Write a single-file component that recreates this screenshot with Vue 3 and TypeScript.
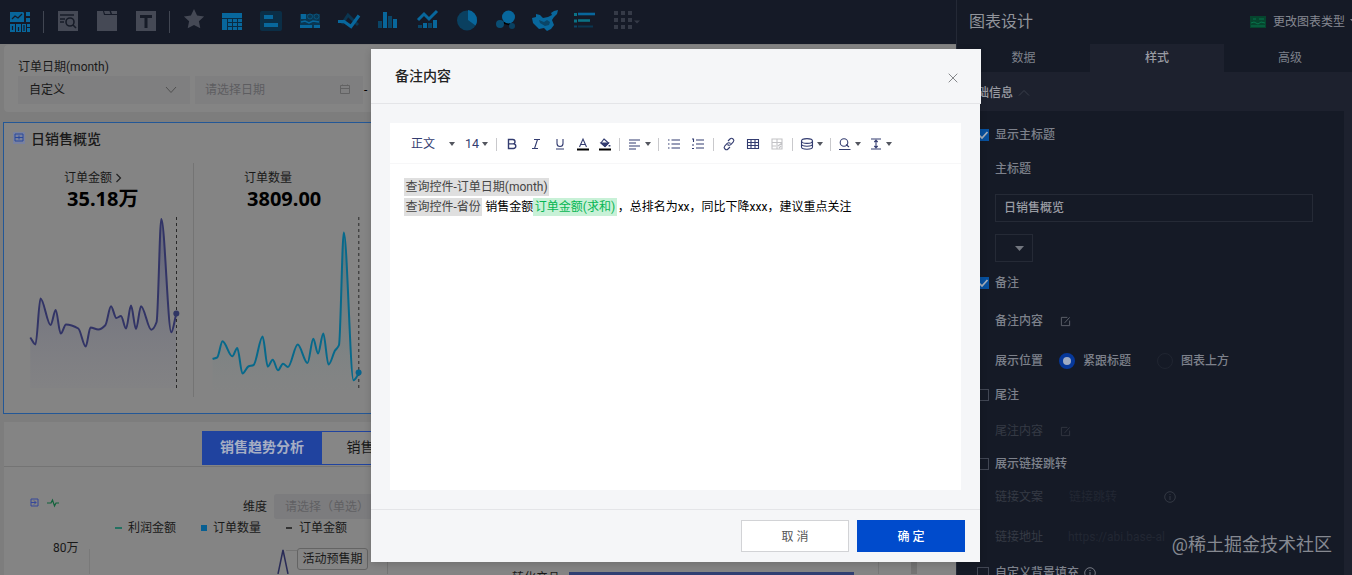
<script setup lang="ts">
type Point = [number, number]

// Monotone cubic smoothing keeps each peak at its data point.
function smooth(points: Point[]): string {
  const n = points.length
  const slopes: number[] = []
  for (let i = 0; i < n - 1; i++) {
    slopes.push((points[i + 1][1] - points[i][1]) / (points[i + 1][0] - points[i][0]))
  }
  const tangents = points.map((_, i) => {
    if (i === 0) return slopes[0]
    if (i === n - 1) return slopes[n - 2]
    const a = slopes[i - 1]
    const b = slopes[i]
    return a * b <= 0 ? 0 : (2 * a * b) / (a + b)
  })
  let d = `M${points[0][0]} ${points[0][1]}`
  for (let i = 0; i < n - 1; i++) {
    const h = (points[i + 1][0] - points[i][0]) / 3
    d += `C${points[i][0] + h} ${points[i][1] + tangents[i] * h} ${points[i + 1][0] - h} ${points[i + 1][1] - tangents[i + 1] * h} ${points[i + 1][0]} ${points[i + 1][1]}`
  }
  return d
}

const amount: Point[] = [
  [30.3, 337.5], [35.5, 344.5], [40.5, 298.5], [50.6, 325], [55.7, 310], [60.7, 333.6], [66, 324.5], [78.3, 328.5],
  [85.7, 346.5], [90.5, 327.5], [98.3, 329.5], [105.3, 325.3], [111, 306.3], [116.3, 318], [121, 316], [126, 328.6],
  [131, 305.6], [136, 329], [141, 306.3], [151.3, 329.7], [156.6, 322], [161.3, 219], [171.3, 332.3], [176, 315]
]
const count: Point[] = [
  [212.6, 359], [217.3, 357.3], [222.5, 341.3], [232.3, 356.3], [237.3, 348], [242.5, 373.6], [248.3, 366.5],
  [253.6, 365], [262.6, 336.6], [267.8, 366.6], [272.7, 359.7], [278, 370.3], [283, 363.7], [288, 367], [297.7, 344.6],
  [307.5, 363], [313.3, 338.7], [318, 353.6], [323.3, 333.4], [328.5, 364.6], [335, 350.6], [339, 345], [343.8, 232.5],
  [353.5, 380.3], [359, 373]
]
const amountLine = smooth(amount)
const countLine = smooth(count)
const amountArea = `${amountLine}V388H30.3Z`
const countArea = `${countLine}V390H212.6Z`

const tabs = ['数据', '样式', '高级']
const legend = [
  { name: '利润金额', kind: 'profit' },
  { name: '订单数量', kind: 'square' },
  { name: '订单金额', kind: 'dark' }
]
</script>

<template>
  <div class="screen">
    <main class="workspace">
      <header class="topbar">
        <svg class="ti" viewBox="0 0 24 24"><g fill="#08669b"><path d="M2 2h13l1 1v9H2zM18 2h4v4h-4zM18 8h4v4h-4zM2 14h5v8H2zM8 14h5v8H8zM14 14h4v8h-4zM19 14h3v3h-3zM19 18h3v4h-3z"/></g><path d="M4 9l3-3 3 2 4-4M4.500 16v4M10.500 17v4M16 15v6" stroke="#151a27" stroke-width="1.200" fill="none"/></svg>
        <i class="bar first"></i>
        <div class="insert">
          <svg class="ti" viewBox="0 0 24 24"><path fill="#454955" d="M2 0h20v20H2z"/><g fill="none" stroke="#171c28" stroke-width="1.600"><path d="M4 4h14M4 8h5M4 11h4"/><circle cx="14" cy="11" r="4"/><path d="M17 14l3 3"/></g></svg>
          <svg class="ti" viewBox="0 0 24 24"><path fill="#454955" d="M2 0h6l1 4h13v16H2zM9 0h5.500l1 3H10zM16 0h6v3h-5z"/></svg>
          <svg class="ti" viewBox="0 0 24 24"><path fill="#454955" d="M2 0h20v20H2z"/><path fill="none" stroke="#171c28" stroke-width="3" d="M6 5.500h12M12 5v12"/></svg>
        </div>
        <i class="bar second"></i>
        <div class="charts">
          <svg class="ti star" viewBox="0 0 24 24"><path fill="#454955" d="M12 1l3.100 6.600 7 .8-5.200 4.900 1.400 7L12 16.900l-6.300 3.400 1.400-7L1.900 8.400l7-.8z"/></svg>
          <svg class="ti" viewBox="0 0 24 24"><path fill="#08679c" d="M2 4h20v17H2z"/><path fill="none" stroke="#0a2c43" d="M2 9.500h20M7.500 13.500H22M7.500 17.500H22M7.500 9.500V21M12.500 9.500V21M17.500 9.500V21"/></svg>
          <svg class="ti" viewBox="0 0 24 24"><rect x="1" y="2" width="22" height="20" rx="2" fill="#0b2e46"/><path fill="#08679c" d="M5 6h9v4H5zM5 14h14v4H5z"/></svg>
          <svg class="ti" viewBox="0 0 24 24"><path fill="#0a3651" d="M2 5h20v14H2z"/><path fill="#08679c" d="M3 5h5v5H3zM2 16h12v3H2zM16 16h6v3h-6z"/><path fill="none" stroke="#08679c" stroke-width="1.500" d="M3 13l4-1 4 2 4-2 6 1"/><circle cx="12" cy="7.500" r="2.500" fill="none" stroke="#08557f"/><circle cx="18.500" cy="7.500" r="2.500" fill="none" stroke="#08557f"/></svg>
          <svg class="ti" viewBox="0 0 24 24"><path fill="none" stroke="#0b3651" stroke-width="3" d="M5 15l6-9 10 10"/><path fill="none" stroke="#08679c" stroke-width="3.200" d="M1 12.500h6l7 5 8-11"/></svg>
          <svg class="ti" viewBox="0 0 24 24"><path fill="#08679c" d="M7 3h4v16H7zM17 10h4v9h-4z"/><path fill="#0a4567" d="M2 12h4v7H2zM12 7h4v12h-4z"/></svg>
          <svg class="ti" viewBox="0 0 24 24"><path fill="none" stroke="#08679c" stroke-width="3" d="M2 11l6-6 5 5 8-8"/><path fill="#08679c" d="M7 14h4v5H7zM17 11h4v8h-4z"/><path fill="#0a4567" d="M2 16h4v3H2zM12 14h4v5h-4z"/></svg>
          <svg class="ti" viewBox="0 0 24 24"><circle cx="12" cy="11.500" r="10" fill="#0a4060"/><path fill="#08679c" d="M13 1a10 10 0 0 1 9 10.500c0 2.500-1 4-1.500 5L13 11z"/></svg>
          <svg class="ti" viewBox="0 0 24 24"><path stroke="#0a4567" d="M7 14l7-5 4 8"/><circle cx="14.500" cy="8" r="6.500" fill="#08679c"/><circle cx="6" cy="15" r="4" fill="#0a4e74"/><circle cx="18" cy="17" r="3" fill="#0a4060"/></svg>
          <svg class="ti wide" viewBox="0 0 28 24"><path fill="#08679c" d="M1 9l4-1V5l4 1 3 3 5-1 4-2-1-2 3-2 4-1-1 4-3 3-2 3 2 5-3 4-4 2-3-3-5 1-4-4-2-2z"/><path fill="#0a4567" d="M8 11l5 2 3-2 3 2-1 3-4 1-5-3z"/></svg>
          <svg class="ti" viewBox="0 0 24 24"><path stroke="#08679c" stroke-width="2.600" d="M6 5h17"/><path stroke="#0b7285" stroke-width="2.600" d="M6 11.500h12"/><path stroke="#0a3651" stroke-width="2" d="M6 17.500h15"/><path fill="#0b7285" d="M2 4h3v3H2zM2 10.500h3v3H2z"/><path fill="#0a4567" d="M2 16.500h3v2H2z"/></svg>
        </div>
        <svg class="ti more" viewBox="0 0 30 24"><path fill="#353a47" d="M2 1h4v4H2zM9 1h4v4H9zM16 1h4v4h-4zM2 8h4v4H2zM9 8h4v4H9zM16 8h4v4h-4zM2 15h4v4H2zM9 15h4v4H9zM16 15h4v4h-4zM22 10.500h6l-3 3z"/></svg>
      </header>

      <section class="filter panel">
        <div class="flabel">订单日期(month)</div>
        <div class="frow">
          <div class="field sel">自定义<svg width="12" height="12" viewBox="0 0 12 12"><path d="M1 3l5 5.500L11 3" fill="none" stroke="#505050"/></svg></div>
          <div class="field date">请选择日期<svg width="12" height="12" viewBox="0 0 12 12"><path d="M1.500 1.500h9v8h-9zM1.500 4.500h9M3.500 .500v1M8.500 .500v1" fill="none" stroke="#626263"/></svg></div>
          <span class="dash">-</span>
        </div>
      </section>

      <section class="kpi">
        <div class="ktitle">
          <svg width="12" height="12" viewBox="0 0 12 12"><path fill="#7881a0" d="M0 0h12v12H0z"/><path d="M2 2h8v7H2zM2 5.500h8M6 3.500v4" fill="none" stroke="#29489b"/></svg>
          日销售概览
        </div>
        <div class="kbody">
          <div class="card">
            <div class="kname">订单金额<svg width="7" height="10" viewBox="0 0 7 10"><path d="M1.500 1l4 4-4 4" fill="none" stroke="#222" stroke-width="1.200"/></svg></div>
            <div class="kvalue">35.18万</div>
            <svg class="spark" width="189" height="184" viewBox="4 211 189 184">
              <defs><linearGradient id="amountFill" x1="0" y1="219" x2="0" y2="388" gradientUnits="userSpaceOnUse"><stop offset=".2" stop-color="#5a5d78" stop-opacity=".65"/><stop offset="1" stop-color="#7e7e84" stop-opacity=".3"/></linearGradient></defs>
              <path :d="amountArea" fill="url(#amountFill)"/>
              <path d="M176.500 217v172" stroke="#292929" stroke-dasharray="3 3"/>
              <path :d="amountLine" fill="none" stroke="#323466" stroke-width="2"/>
              <circle cx="176.300" cy="313.500" r="3" fill="#303664"/>
            </svg>
          </div>
          <div class="card next">
            <div class="kname">订单数量</div>
            <div class="kvalue">3809.00</div>
            <svg class="spark" width="177" height="184" viewBox="194 211 177 184">
              <defs><linearGradient id="countFill" x1="0" y1="233" x2="0" y2="390" gradientUnits="userSpaceOnUse"><stop offset=".2" stop-color="#4f747c" stop-opacity=".65"/><stop offset="1" stop-color="#7f8585" stop-opacity=".15"/></linearGradient></defs>
              <path :d="countArea" fill="url(#countFill)"/>
              <path d="M358.800 217v171" stroke="#292929" stroke-dasharray="3 3"/>
              <path :d="countLine" fill="none" stroke="#07698b" stroke-width="2"/>
              <circle cx="358.600" cy="372.500" r="3" fill="#07648d"/>
            </svg>
          </div>
        </div>
      </section>

      <section class="tabpanel panel">
        <div class="tab on">销售趋势分析</div>
        <div class="tab off">销售品类分析</div>
      </section>

      <section class="trend">
        <div class="trow">
          <svg width="30" height="12" viewBox="0 0 30 12"><path d="M1 2h7v7H1zM1 5.500h5M4 3.500l2 2-2 2" fill="none" stroke="#35479a"/><path d="M17 6h4l1.500-3 2 6 1.500-3h3" fill="none" stroke="#11633b" stroke-width="1.200"/></svg>
          <span class="dim">维度</span>
          <div class="field dimsel">请选择（单选）</div>
        </div>
        <div class="legend"><span v-for="l in legend" :key="l.name" :class="l.kind"><i></i>{{ l.name }}</span></div>
        <div class="plot">
          <span class="tick">80万</span>
          <svg width="208" height="30" viewBox="89 545 208 30"><path d="M89.500 550v25" stroke="#797979"/><path d="M278 575l5-24 5 24" fill="none" stroke="#292b57" stroke-width="1.500"/><path d="M286 551.500h11" stroke="#737373"/></svg>
          <span class="mark">活动预售期</span>
          <div class="region"><span>转化产品</span><i></i></div>
          <div class="edge"></div>
        </div>
      </section>
    </main>

    <aside class="side">
      <div class="shead">
        <h2>图表设计</h2>
        <svg width="16" height="12" viewBox="0 0 16 12"><path fill="#06452e" d="M0 0h16v12H0z"/><path d="M1 7l3-1 4 2 3-2 4 1M1 10h14M3 3h3M9 3h5" stroke="#07744c" fill="none"/></svg>
        <span>更改图表类型</span>
        <svg class="tiny" width="7" height="4" viewBox="0 0 7 4"><path fill="#858891" d="M0 0h7L3.500 4z"/></svg>
      </div>
      <nav><span v-for="(t, i) in tabs" :key="t" :class="{ active: i === 1 }">{{ t }}</span></nav>
      <div class="shelf">基础信息<svg width="12" height="8" viewBox="0 0 12 8"><path d="M1 6.500L6 1.500l5 5" fill="none" stroke="#393e4a"/></svg></div>
      <div class="form">
        <div class="row"><i class="box checked"><svg viewBox="0 0 12 12"><path d="M2 6l3 3 5.500-6" fill="none" stroke="#a5adb8" stroke-width="1.700"/></svg></i>显示主标题</div>
        <div class="row">主标题</div>
        <div class="row input">日销售概览</div>
        <div class="row color"><svg width="9" height="6" viewBox="0 0 9 6"><path fill="#72767f" d="M0 0h9L4.500 5z"/></svg></div>
        <div class="row"><i class="box checked"><svg viewBox="0 0 12 12"><path d="M2 6l3 3 5.500-6" fill="none" stroke="#a5adb8" stroke-width="1.700"/></svg></i>备注</div>
        <div class="row"><span class="name">备注内容</span><svg class="edit" viewBox="0 0 12 12"><path d="M8 1.500H1.500v9h9V5M5 7.500l5.500-6" fill="none" stroke="#60656f"/></svg></div>
        <div class="row"><span class="name">展示位置</span><i class="radio on"></i><span class="opt">紧跟标题</span><i class="radio"></i><span>图表上方</span></div>
        <div class="row"><i class="box"></i>尾注</div>
        <div class="row faint"><span class="name">尾注内容</span><svg class="edit" viewBox="0 0 12 12"><path d="M8 1.500H1.500v9h9V5M5 7.500l5.500-6" fill="none" stroke="#323742"/></svg></div>
        <div class="row"><i class="box"></i>展示链接跳转</div>
        <div class="row faint"><span class="name">链接文案</span><span class="hint copy">链接跳转</span><svg class="info" viewBox="0 0 12 12"><circle cx="6" cy="6" r="5.300"/><path d="M6 5v4M6 3v1"/></svg></div>
        <div class="row faint"><span class="name">链接地址</span><span class="hint url">https://abi.base-al</span></div>
        <div class="row"><i class="box last"></i>自定义背景填充<svg class="info bright" viewBox="0 0 12 12"><circle cx="6" cy="6" r="5.300"/><path d="M6 5v4M6 3v1"/></svg></div>
      </div>
    </aside>

    <div class="modal">
      <div class="mhead">备注内容<svg width="10" height="10" viewBox="0 0 10 10"><path d="M.7.700l8.600 8.600M9.300.700L.7 9.300" stroke="#85878b"/></svg></div>
      <div class="mbody">
        <div class="editor">
          <div class="tools">
            <span class="para">正文</span><b class="caret c1"></b><span class="size">14</span><b class="caret c2"></b><i></i>
            <svg viewBox="0 0 16 16"><path d="M4.500 3.500h4.300a2.200 2.200 0 0 1 0 4.400H4.500zM4.500 7.900h5a2.300 2.300 0 0 1 0 4.600h-5z" stroke-width="1.400"/></svg>
            <svg class="more1" viewBox="0 0 16 16"><path d="M6 3.500h6M4 12.500h6M9.500 3.500l-3 9"/></svg>
            <svg class="more1" viewBox="0 0 16 16"><path d="M5 3v4.500a3 3 0 0 0 6 0V3M4 13h8"/></svg>
            <svg viewBox="0 0 16 16"><path d="M4.500 11L8 3l3.500 8M6 8.500h4"/><path d="M2 13.500h12" stroke="#000" stroke-width="2"/></svg>
            <svg class="less1" viewBox="0 0 16 16"><path d="M7 3l4.500 4L8 10.500 4 7z"/><path d="M4 7h7.500L8 10.500z" fill="#333c70"/><path d="M12.500 9v1.500" stroke-width="1.800"/><path d="M2 13.500h12" stroke="#000" stroke-width="2"/></svg>
            <i class="less1"></i>
            <svg viewBox="0 0 16 16"><path d="M2 4h11M2 7h7M2 10h11M2 13h7"/></svg><b class="caret"></b><i></i>
            <svg viewBox="0 0 16 16"><path d="M2 4h1.500M2 8h1.500M2 12h1.500M5.500 4H14M5.500 8H14M5.500 12H14"/></svg>
            <svg class="more1" viewBox="0 0 16 16"><path d="M6 4h8M6 8h8M6 12h8M2 3h1.500v3M2 9h2M2 12.500h2" /></svg><i></i>
            <svg viewBox="0 0 16 16"><path d="M7 5l2-2c2-2 5 1 3.300 3l-2.500 2.500C9 9.500 7.500 9.500 6.500 8.500M9 11l-2 2c-2 2-5-1-3.300-3l2.500-2.500C7 6.500 8.500 6.500 9.500 7.500"/></svg>
            <svg class="more1" viewBox="0 0 16 16"><path d="M2.500 3.500h11v9h-11zM2.500 6.500h11M2.500 9.500h11M6 3.500v9M10 3.500v9"/></svg>
            <svg class="more1 off" viewBox="0 0 16 16"><path d="M3 3h10v10H3zM3 6.500h10M3 10h4M8 3v10M9 10l4-3M10 12l2-2"/></svg><i></i>
            <svg class="less1" viewBox="0 0 16 16"><ellipse cx="8" cy="5" rx="5.500" ry="2.400"/><path d="M2.500 5v6c0 3 11 3 11 0V5M2.500 8c0 3 11 3 11 0"/></svg><b class="caret"></b><i></i>
            <svg class="less1" viewBox="0 0 16 16"><circle cx="7" cy="6.500" r="3.800"/><path d="M9 8.500l3 2.500M2 13.500h11.500"/></svg><b class="caret"></b>
            <svg viewBox="0 0 16 16"><path d="M3 3h10M3 13h10M8 4.500v7M6.300 6L8 4.300 9.700 6M6.300 10L8 11.700 9.700 10"/></svg><b class="caret"></b>
          </div>
          <div class="content">
            <p><span class="token">查询控件-订单日期(month)</span></p>
            <p><span class="token">查询控件-省份</span><span class="plain">销售金额</span><span class="token green">订单金额(求和)</span><span class="tail">，总排名为xx，同比下降xxx，建议重点关注</span></p>
          </div>
        </div>
      </div>
      <div class="mfoot"><button class="cancel">取 消</button><button class="ok">确 定</button></div>
    </div>
    <div class="credit">@稀土掘金技术社区</div>
  </div>
</template>

<style>
html, body { overflow: hidden; }
</style>

<style scoped>
* { box-sizing: border-box; }
.screen { position: relative; display: grid; grid-template-columns: 957px 395px; width: 1352px; height: 575px; overflow: hidden; background: #7c7c7c; font: 12px/20px Roboto, "Noto Sans CJK SC", sans-serif; color: #191919; }
svg { display: block; flex: none; }
.workspace { display: flex; flex-direction: column; height: 575px; overflow: hidden; background: #7d7d7d; }
.panel { background: #848484; }
.topbar { flex: none; display: flex; align-items: center; height: 44px; background: #151a27; padding-left: 8px; }
.ti { width: 24px; height: 24px; }
.bar { width: 1px; height: 22px; background: #414652; }
.first { margin-left: 11px; }
.insert { display: flex; gap: 15px; margin: 2px 0 0 12px; }
.second { margin-left: 11px; }
.charts { display: flex; gap: 15.1px; margin: -2px 0 0 12px; }
.charts .wide { width: 28px; margin: 0 -2px; }
.charts .star { margin: -1px -1px 0 0; }
.more { width: 30px; margin: -1px 0 0 16px; }
.filter { flex: none; height: 67px; margin: 1px 0 0 4px; padding: 12px 0 0 14px; border-radius: 4px 0 0 4px; }
.flabel { height: 19px; }
.frow { display: flex; align-items: center; gap: 5px; }
.field { display: flex; align-items: center; justify-content: space-between; height: 28px; padding: 0 13px 0 11px; background: #7f7f80; }
.sel { width: 172px; }
.date { width: 168px; color: #5d5d60; padding: 0 12px 0 10px; }
.dash { margin-left: -4px; color: #000; }
.kpi { flex: none; height: 292px; margin: 10px 0 0 3px; border: 1px solid #235796; background: #848484; }
.ktitle { display: flex; align-items: center; gap: 6px; height: 32px; padding: 0 0 0 9px; font-size: 14px; font-weight: 500; }
.ktitle svg { margin-top: -2px; }
.kbody { display: flex; margin-top: 8px; }
.card { width: 189px; height: 234px; padding-top: 5px; }
.next { width: 178px; border-left: 1px solid #747474; }
.kname { display: flex; align-items: center; gap: 3px; padding-left: 60px; height: 20px; }
.next .kname { padding-left: 50px; }
.kvalue { padding-left: 63px; height: 22px; font: 700 20px/22px "Noto Sans", "Noto Sans CJK SC", sans-serif; color: #000; }
.next .kvalue { padding-left: 53px; }
.spark { margin-top: 1px; }
.tabpanel { flex: none; display: flex; align-items: flex-start; height: 45px; margin: 8px 0 0 4px; padding: 9px 0 0 198px; border-bottom: 1px solid #747474; }
.tab { height: 34px; width: 120px; text-align: center; font-size: 14px; line-height: 32px; white-space: nowrap; }
.tab.on { background: #20439f; color: #a6aec3; font-weight: 700; }
.tab.off { background: #868686; border: 1px solid #20439f; border-left: 0; width: 130px; padding-left: 4px; line-height: 30px; }
.trend { flex: 1; margin-left: 4px; background: #848484; padding-top: 27px; min-height: 0; }
.trow { display: flex; align-items: center; height: 24px; padding-left: 26px; }
.trow > svg { margin-top: -7px; }
.dim { margin-left: 183px; margin-top: 2px; }
.dimsel { width: 99px; height: 25px; margin-left: 7px; padding-top: 2px; color: #606063; background: #7c7c7e; white-space: nowrap; border-radius: 3px; }
.legend { display: flex; height: 20px; padding-left: 111px; }
.legend span { display: flex; align-items: center; width: 86px; }
.legend i { width: 7px; height: 2px; margin-right: 6px; background: #237161; }
.legend .square i { width: 6px; height: 6px; background: #075f92; }
.legend .dark i { width: 6px; background: #333; margin-right: 7px; }
.legend .square { width: 86px; margin-left: -1px; padding-left: 1px; }
.plot { display: flex; align-items: flex-start; }
.tick { width: 85px; padding-left: 49px; }
.plot svg { margin-top: 6px; }
.mark { flex: none; width: 71px; height: 22px; line-height: 20px; margin-top: 10px; border: 1px solid #646464; border-radius: 3px; text-align: center; }
.region { flex: none; display: flex; align-items: flex-start; margin: 22px 0 0 19px; width: 492px; height: 14px; border-left: 1px solid #747474; border-right: 1px solid #777; padding-left: 124px; }
.region span { margin-top: 8px; }
.region i { margin: 12px 0 0 9px; width: 285px; height: 3px; background: #303f72; }
.edge { width: 6px; height: 14px; margin: 22px 0 0 32px; background: #737373; }
.side { height: 575px; overflow: hidden; background: #151a26; color: #7d818b; box-shadow: -1px 0 #242936; }
.shead { display: flex; align-items: center; height: 44px; padding-left: 12px; color: #858891; }
.shead h2 { flex: none; width: 281px; margin: 0; font-size: 16px; font-weight: 400; color: #91949b; }
.shead span { margin-left: 7px; white-space: nowrap; }
.tiny { margin: -3px 0 0 5px; }
nav { display: grid; grid-template-columns: 133px 134px 128px; height: 28px; line-height: 29px; text-align: center; }
nav .active { background: #1d212e; color: #9a9ca3; font-weight: 500; }
nav span:last-child { padding-left: 4px; }
.shelf { display: flex; align-items: center; gap: 5px; height: 39px; padding: 2px 0 0 8px; background: #1d212e; color: #9a9ca3; font-weight: 500; }
.form { display: grid; grid-template-rows: 34px 39px 40px 35px 38px 40px 34px 36px 33px 33px 40px 36px 28px; padding: 10px 0 0 38px; border-right: 8px solid #1d212e; }
.row { display: flex; align-items: center; height: 28px; white-space: nowrap; font-weight: 500; }
.input { width: 318px; border: 1px solid #252a36; padding-left: 8px; color: #9a9ca3; }
.color { width: 38px; border: 1px solid #252a36; padding: 2px 0 0 19px; }
.box { width: 12px; height: 12px; margin: 0 6px 0 -18px; border: 1px solid #414653; flex: none; }
.box.checked { border: 0; background: #07509d; }
.box.last { margin-left: -18px; }
.name { width: 65px; }
.edit { width: 11px; height: 11px; }
.radio { width: 16px; height: 16px; margin-right: 8px; border: 1px solid #202531; border-radius: 50%; }
.radio.on { border: 4px solid #06389a; background: #9eabc3; margin-left: -1px; }
.opt { width: 74px; }
.faint { color: #353a45; font-weight: 400; }
.hint { color: #222733; }
.copy { width: 104px; padding-left: 9px; }
.url { padding-left: 8px; }
.info { width: 12px; height: 12px; fill: none; stroke: #343944; }
.bright { margin-left: 5px; stroke: #747882; }
.modal { position: absolute; left: 371px; top: 49px; width: 609px; height: 513px; background: #f5f6f8; box-shadow: 0 2px 7px rgba(0, 0, 0, .16); }
.mhead { display: flex; align-items: center; justify-content: space-between; width: 610px; height: 55px; padding: 0 23px 1px 24px; border-bottom: 1px solid #e4e5e8; background: #f5f6f8; font-size: 14px; font-weight: 500; color: #222; }
.mhead svg { margin-top: 4px; }
.mbody { height: 405px; padding: 19px 19px; }
.editor { width: 571px; height: 367px; background: #fff; }
.tools { display: flex; align-items: center; gap: 7px; height: 41px; padding: 2px 0 0 21px; border-bottom: 1px solid #f7f7f8; color: #333c70; }
.tools svg { width: 16px; height: 16px; fill: none; stroke: #333c70; stroke-width: 1.1; }
.tools > i { width: 1px; height: 13px; background: #c9c9cc; }
.tools .off { stroke: #c3c3c6; }
.tools .more1 { margin-left: 1px; }
.tools .less1 { margin-left: -1px; }
.caret { width: 0; height: 0; border: 3px solid transparent; border-top: 4px solid #53565f; border-bottom: 0; margin: 0 0 0 -5px; }
.caret.c1 { margin-left: 7px; }
.caret.c2 { margin: 0 1px 0 -4px; }
.size { width: 14px; margin-left: 3px; font-size: 12.500px; }
.content { padding: 13px 0 0 14px; color: #000; }
.content p { display: flex; align-items: center; height: 20px; margin: 0; white-space: nowrap; }
.token { height: 18px; line-height: 18px; padding: 0 1.5px; background: #dfdfdf; color: #444; }
.plain { margin: 0 0 0 3px; }
.green { background: #c8f1d7; color: #06b653; }
.tail { margin-left: 1px; }
.mfoot { display: flex; justify-content: flex-end; gap: 8px; height: 53px; padding: 10px 15px 0 0; border-top: 1px solid #e4e5e8; }
button { width: 108px; height: 32px; padding: 2px 0 0; border-radius: 0; font: 12px/20px Roboto, "Noto Sans CJK SC", sans-serif; }
.cancel { border: 1px solid #d2d3d6; background: #fff; color: #555; }
.ok { border: 0; background: #004bcc; color: #fff; font-weight: 500; }
.credit { position: absolute; right: 20px; bottom: 18px; font-size: 18px; line-height: 24px; color: #868991; }
</style>
